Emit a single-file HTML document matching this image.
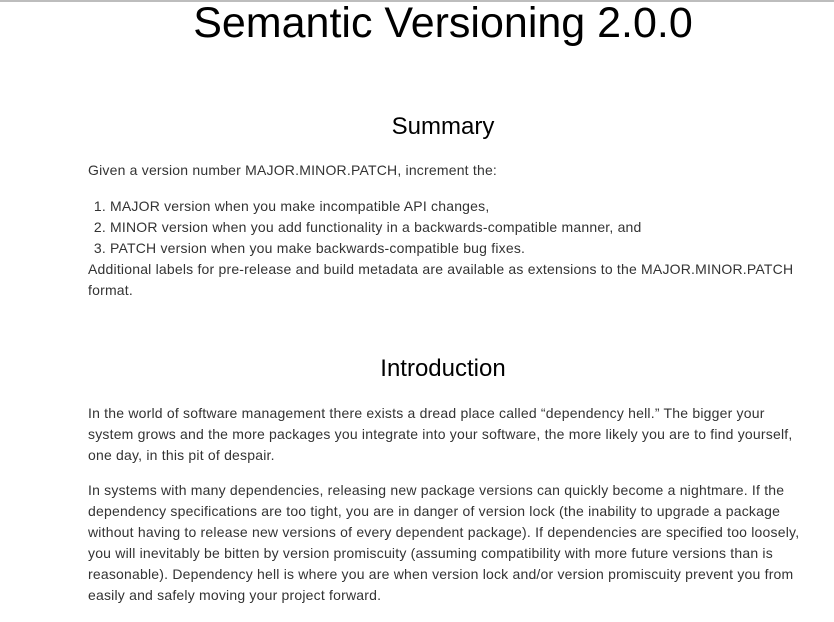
<!DOCTYPE html>
<html><head><meta charset="utf-8"><style>
html,body{margin:0;padding:0;background:#fff;}
body{border-top:2px solid #bdbdbd;width:834px;height:620px;overflow:hidden;font-family:"Liberation Sans",Arial,sans-serif;color:#333;font-size:14px;line-height:21px;letter-spacing:0.2px;}
.c{position:absolute;left:88px;width:712px;}
h1{position:absolute;left:0;width:886px;text-align:center;top:-3px;margin:0;font-weight:normal;font-size:43px;line-height:52px;color:#000;letter-spacing:0;}
h2{position:absolute;left:88px;width:710px;text-align:center;margin:0;font-weight:normal;font-size:24px;line-height:30px;color:#000;letter-spacing:0;}
p{margin:0;}
ol{margin:0;padding-left:22px;}
</style></head><body>
<h1>Semantic Versioning 2.0.0</h1>
<h2 style="top:112px">Summary</h2>
<div class="c" style="top:160px">
<p>Given a version number MAJOR.MINOR.PATCH, increment the:</p>
<ol style="margin-top:15px">
<li>MAJOR version when you make incompatible API changes,</li>
<li>MINOR version when you add functionality in a backwards-compatible manner, and</li>
<li>PATCH version when you make backwards-compatible bug fixes.</li>
</ol>
<p>Additional labels for pre-release and build metadata are available as extensions to the MAJOR.MINOR.PATCH format.</p>
</div>
<h2 style="top:354px">Introduction</h2>
<div class="c" style="top:403px">
<p>In the world of software management there exists a dread place called “dependency hell.” The bigger your system grows and the more packages you integrate into your software, the more likely you are to find yourself, one day, in this pit of despair.</p>
<p style="margin-top:14px">In systems with many dependencies, releasing new package versions can quickly become a nightmare. If the dependency specifications are too tight, you are in danger of version lock (the inability to upgrade a package without having to release new versions of every dependent package). If dependencies are specified too loosely, you will inevitably be bitten by version promiscuity (assuming compatibility with more future versions than is reasonable). Dependency hell is where you are when version lock and/or version promiscuity prevent you from easily and safely moving your project forward.</p>
</div>
</body></html>
